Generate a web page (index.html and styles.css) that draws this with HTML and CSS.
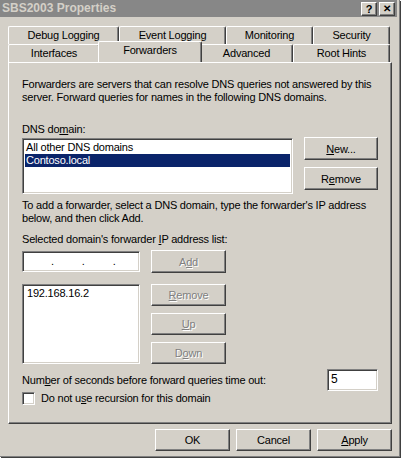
FILE: index.html
```html
<html>

<head>
    <meta charset="UTF-8">
    <title>SBS2003 Properties</title>
    <link rel="stylesheet" href="styles.css">
</head>

<body>
    <div class="window">
        <div class="titlebar">
            <span class="title">SBS2003 Properties</span>
            <div class="caption">
                <span class="cap_btn">?</span>
                <span class="cap_btn close">&#x2715;</span>
            </div>
        </div>
        <div class="client">
            <!-- tab strip, two rows -->
            <div class="tab_row back">
                <div class="tab" style="width:111px">Debug Logging</div>
                <div class="tab" style="width:107px">Event Logging</div>
                <div class="tab" style="width:87px">Monitoring</div>
                <div class="tab" style="width:77px">Security</div>
            </div>
            <div class="tab_row front">
                <div class="tab" style="width:92px">Interfaces</div>
                <div class="tab selected" style="width:104px">Forwarders</div>
                <div class="tab" style="width:93px">Advanced</div>
                <div class="tab" style="width:97px">Root Hints</div>
            </div>

            <div class="panel">
                <p class="intro">Forwarders are servers that can resolve DNS queries not answered by this<br>server. Forward queries for names in the following DNS domains.</p>

                <div class="label dns_label">DNS do<u>m</u>ain:</div>
                <div class="row">
                    <div class="sunken listbox">
                        <div class="item">All other DNS domains</div>
                        <div class="item selected_item">Contoso.local</div>
                    </div>
                    <div class="btn_col">
                        <button class="btn" type="button"><u>N</u>ew...</button>
                        <button class="btn" type="button">R<u>e</u>move</button>
                    </div>
                </div>

                <p class="hint">To add a forwarder, select a DNS domain, type the forwarder's IP address<br>below, and then click Add.</p>
                <div class="label ip_label">Selected domain's forwarder <u>I</u>P address list:</div>

                <div class="ip_row">
                    <div class="sunken ip_field">
                        <span>.</span><span>.</span><span>.</span>
                    </div>
                    <button class="btn disabled" type="button">A<u>d</u>d</button>
                </div>

                <div class="ip_row list_row">
                    <div class="sunken ip_list">
                        <div class="item">192.168.16.2</div>
                    </div>
                    <div class="btn_col small">
                        <button class="btn disabled" type="button"><u>R</u>emove</button>
                        <button class="btn disabled" type="button"><u>U</u>p</button>
                        <button class="btn disabled" type="button">D<u>o</u>wn</button>
                    </div>
                </div>

                <div class="timeout_row">
                    <span>Num<u>b</u>er of seconds before forward queries time out:</span>
                    <div class="sunken timeout">5</div>
                </div>

                <div class="check_row">
                    <span class="sunken checkbox"></span>
                    <span>Do not u<u>s</u>e recursion for this domain</span>
                </div>
            </div>

            <div class="dialog_buttons">
                <button class="btn" type="button">OK</button>
                <button class="btn" type="button">Cancel</button>
                <button class="btn" type="button"><u>A</u>pply</button>
            </div>
        </div>
    </div>
</body>

</html>
```

FILE: styles.css
```css
body {
    margin: 0;
    background: #fff;
    font-family: "Liberation Sans", Arial, sans-serif;
    font-size: 11px;
    line-height: 13px;
    letter-spacing: -0.2px;
    color: #000;
}

p {
    margin: 0;
    white-space: nowrap;
}

.window {
    width: 397px;
    height: 454px;
    padding: 0 2px 2px 0;
    background: #d4d0c8;
    border-right: 1px solid #808080;
    border-bottom: 1px solid #808080;
    box-shadow: 1px 1px 0 #404040;
}

.titlebar {
    height: 17px;
    background: #878787;
    display: flex;
    align-items: center;
    justify-content: space-between;
    padding: 0 2px 0 2px;
}

.title {
    color: #d4d0c8;
    font-weight: bold;
    font-size: 12px;
    letter-spacing: 0;
}

.caption {
    display: flex;
    gap: 2px;
}

.cap_btn {
    width: 14px;
    height: 12px;
    background: #d4d0c8;
    border: 1px solid;
    border-color: #fff #404040 #404040 #fff;
    box-shadow: inset -1px -1px #808080;
    font-weight: bold;
    font-size: 11px;
    line-height: 12px;
    text-align: center;
    letter-spacing: 0;
}

.cap_btn.close {
    font-size: 10px;
}

.client {
    padding: 9px 0 0 8px;
}

/* tabs */
.tab_row {
    display: flex;
    height: 18px;
}

.tab {
    flex: none;
    box-sizing: border-box;
    height: 100%;
    background: #d4d0c8;
    border-top: 1px solid #fff;
    border-left: 1px solid #fff;
    border-right: 1px solid #404040;
    box-shadow: inset -1px 0 #808080;
    border-radius: 2px 2px 0 0;
    text-align: center;
    line-height: 17px;
}

.tab.selected {
    position: relative;
    z-index: 1;
    height: 21px;
    margin: -3px -2px -1px -2px;
    line-height: 17px;
}

/* panel */
.panel {
    box-sizing: border-box;
    width: 384px;
    height: 362px;
    padding: 15px 13px 0 13px;
    border: 1px solid;
    border-color: #fff #404040 #404040 #fff;
    box-shadow: inset -1px -1px #808080;
}

.dns_label {
    margin-top: 19px;
    margin-bottom: 1px;
}

.row {
    display: flex;
    justify-content: space-between;
}

.sunken {
    box-sizing: border-box;
    background: #fff;
    border: 1px solid;
    border-color: #808080 #fff #fff #808080;
    box-shadow: inset 1px 1px #404040, inset -1px -1px #d4d0c8;
}

.listbox {
    width: 271px;
    height: 56px;
    margin-top: 1px;
    padding: 2px 2px;
}

.item {
    height: 13px;
    padding-left: 1px;
}

.selected_item {
    background: #0a246a;
    color: #fff;
}

.btn_col {
    display: flex;
    flex-direction: column;
    gap: 7px;
}

.btn {
    box-sizing: border-box;
    width: 74px;
    height: 23px;
    padding: 0;
    background: #d4d0c8;
    border: 1px solid;
    border-color: #fff #404040 #404040 #fff;
    box-shadow: inset -1px -1px #808080;
    font-family: inherit;
    font-size: 11px;
    letter-spacing: inherit;
    color: #000;
}

.btn.disabled {
    color: #808080;
    text-shadow: 1px 1px #fff;
}

.hint {
    margin-top: 5px;
}

.ip_label {
    margin-top: 8px;
}

.ip_row {
    display: flex;
    gap: 11px;
    margin-top: 4px;
    align-items: flex-start;
}

.ip_field {
    width: 118px;
    height: 21px;
    margin-top: 1px;
    display: flex;
    gap: 28px;
    padding: 3px 0 0 28px;
}

.ip_row .btn {
    width: 75px;
}

.list_row {
    margin-top: 11px;
}

.ip_list {
    width: 118px;
    height: 80px;
    padding: 2px 3px;
}

.btn_col.small .btn {
    height: 22px;
}

.timeout_row {
    display: flex;
    justify-content: space-between;
    align-items: center;
    margin-top: 5px;
}

.timeout {
    width: 51px;
    height: 22px;
    padding: 3px 3px;
    font-size: 12px;
}

.check_row {
    display: flex;
    align-items: center;
    gap: 6px;
    margin-top: 1px;
}

.checkbox {
    display: block;
    width: 13px;
    height: 13px;
}

.dialog_buttons {
    display: flex;
    justify-content: flex-end;
    gap: 6px;
    width: 384px;
    margin-top: 5px;
}

.dialog_buttons .btn {
    width: 75px;
    height: 22px;
}
```
